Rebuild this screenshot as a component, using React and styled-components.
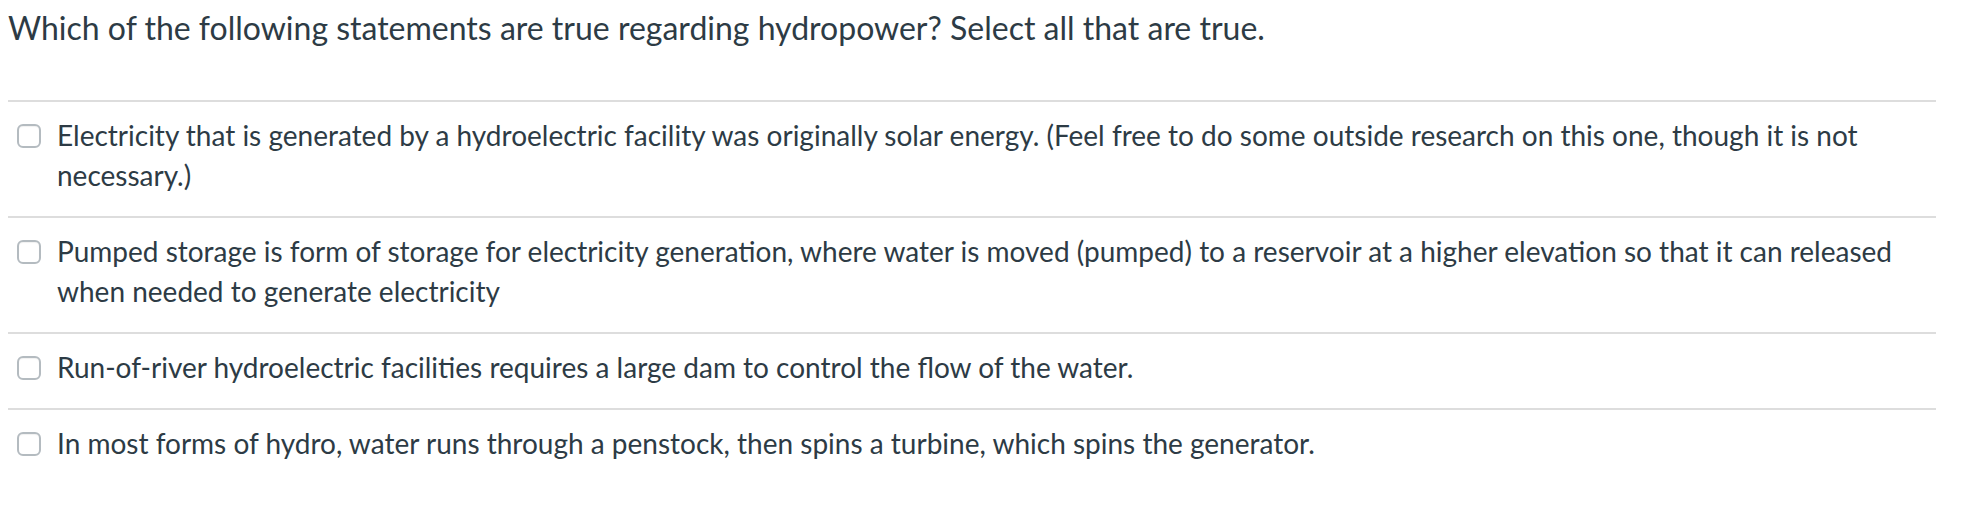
import React from 'react';
import styled, {createGlobalStyle} from 'styled-components';

const GlobalStyle = createGlobalStyle`
    body {
        margin: 8px;
        background: #fff;
        font-family: Lato, "Open Sans", sans-serif;
        color: #2D3B45;
    }
`;

const Wrapper = styled.div`
    width: 1928px;
`;
const Question = styled.div`
    font-size: 32px;
    line-height: 40px;
    margin-bottom: 52px;
`;
const Answers = styled.div`
    display: flex;
    flex-direction: column;
`;
const Answer = styled.label`
    display: flex;
    align-items: flex-start;
    border-top: 2px solid #ddd;
    padding: 13px 0 21px;
    &:last-child {
        padding-bottom: 13px;
    }
`;
const Box = styled.span`
    flex: none;
    width: 24px;
    height: 24px;
    margin: 9px 16px 0 9px;
    box-sizing: border-box;
    border: 2px solid #b4bbc0;
    border-radius: 6px;
    background: #fff;
    box-shadow: inset 0 1px 1px rgba(0,0,0,0.06);
`;
const AnswerText = styled.span`
    font-size: 28px;
    line-height: 40px;
`;

const answers = [
    'Electricity that is generated by a hydroelectric facility was originally solar energy. (Feel free to do some outside research on this one, though it is not necessary.)',
    'Pumped storage is form of storage for electricity generation, where water is moved (pumped) to a reservoir at a higher elevation so that it can released when needed to generate electricity',
    'Run-of-river hydroelectric facilities requires a large dam to control the flow of the water.',
    'In most forms of hydro, water runs through a penstock, then spins a turbine, which spins the generator.'
];

export default function App() {
    return (
        <Wrapper>
            <GlobalStyle />
            <Question>Which of the following statements are true regarding hydropower? Select all that are true.</Question>
            <Answers>
                {answers.map((a, i) => (
                    <Answer key={i}>
                        <Box />
                        <AnswerText>{a}</AnswerText>
                    </Answer>
                ))}
            </Answers>
        </Wrapper>
    );
}
